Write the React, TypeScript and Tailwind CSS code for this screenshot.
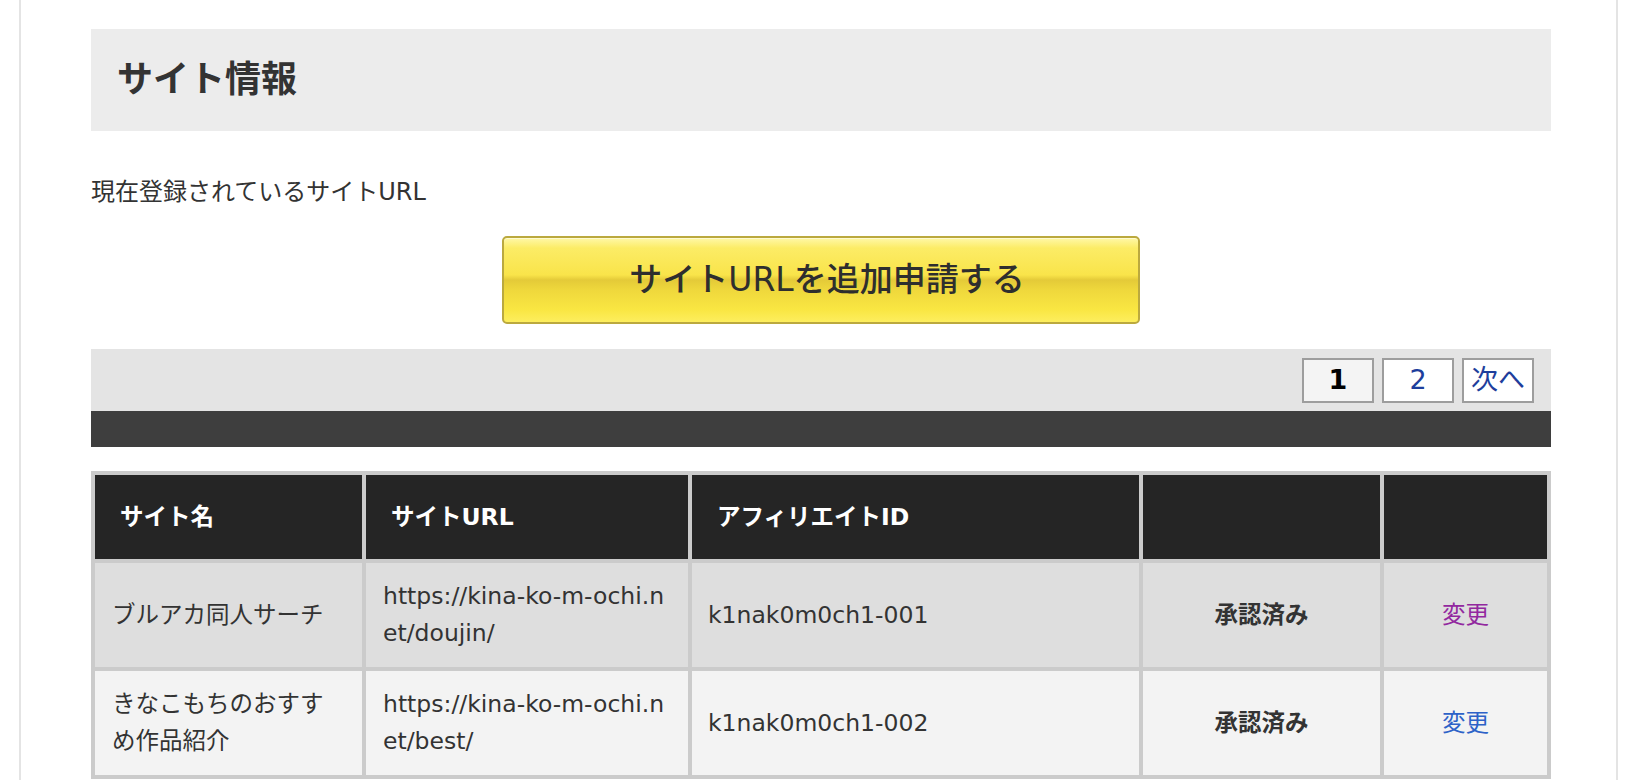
const sites = [
  {
    name: ["ブルアカ同人サーチ"],
    url: ["https://kina-ko-m-ochi.n", "et/doujin/"],
    id: "k1nak0m0ch1-001",
    status: "承認済み",
    visited: true,
    bg: "bg-[#dedede]",
  },
  {
    name: ["きなこもちのおすす", "め作品紹介"],
    url: ["https://kina-ko-m-ochi.n", "et/best/"],
    id: "k1nak0m0ch1-002",
    status: "承認済み",
    visited: false,
    bg: "bg-[#f3f3f3]",
  },
];

function Lines({ lines }: { lines: string[] }) {
  return (
    <span>
      {lines.map((l, i) => (
        <span key={i}>
          {i > 0 && <br />}
          {l}
        </span>
      ))}
    </span>
  );
}

function AddSiteButton() {
  return (
    <button className="mx-auto flex h-[88px] w-[638px] items-center justify-center rounded-[5px] border-2 border-[#bba93e] bg-[linear-gradient(to_bottom,#fff8a8_0%,#fcec66_12%,#f9e44a_44%,#e4ca38_50%,#efd83c_62%,#f9e642_85%,#fdee5e_100%)] pl-3 text-[33px] font-medium text-[#2e2e2e] shadow-[inset_0_1px_0_#fffbd0]">
      サイトURLを追加申請する
    </button>
  );
}

function Pager() {
  return (
    <div className="flex h-[62px] items-center justify-end gap-2 bg-[#e4e4e4] pr-[17px] text-[27px]">
      <span className="flex h-[45px] w-[72px] items-center justify-center border-2 border-[#9d9d9d] bg-[#f4f4f4] font-bold text-black">
        1
      </span>
      <a className="flex h-[45px] w-[72px] items-center justify-center border-2 border-[#9d9d9d] bg-white text-[#1e3e9c]">
        2
      </a>
      <a className="flex h-[45px] w-[72px] items-center justify-center border-2 border-[#9d9d9d] bg-white text-[#1e3e9c]">
        次へ
      </a>
    </div>
  );
}

export default function App() {
  return (
    <div className="min-h-screen bg-white font-['DejaVu_Sans','Noto_Sans_CJK_JP',sans-serif] text-[#333]">
      <div className="ml-[19px] min-h-screen w-[1599px] border-x-2 border-[#e4e4e4] pb-10 pl-[70px] pt-[29px]">
        <div className="w-[1460px]">
          {/* Title */}
          <div className="flex h-[102px] items-center bg-[#ececec] pl-[26px]">
            <h1 className="text-[36px] font-bold">サイト情報</h1>
          </div>

          <p className="mt-[43px] text-[24px] leading-[37px]">現在登録されているサイトURL</p>

          <div className="mt-[25px]">
            <AddSiteButton />
          </div>

          <div className="mt-[25px]">
            <Pager />
            <div className="h-[36px] bg-[#3e3e3e]" />
          </div>

          {/* Site list */}
          <div className="mt-[24px] grid grid-cols-[267px_322px_447px_237px_163px] gap-1 bg-[#cbcbcb] p-1 text-[23.5px] leading-[37px]">
            <div className="flex h-[84px] items-center bg-[#252525] pl-[25px] font-bold text-white">サイト名</div>
            <div className="flex h-[84px] items-center bg-[#252525] pl-[25px] font-bold text-white">サイトURL</div>
            <div className="flex h-[84px] items-center bg-[#252525] pl-[25px] font-bold text-white">アフィリエイトID</div>
            <div className="h-[84px] bg-[#252525]" />
            <div className="h-[84px] bg-[#252525]" />

            {sites.map((s) => (
              <div key={s.id} className="contents">
                <div className={`flex h-[104px] items-center px-[17px] ${s.bg}`}>
                  <Lines lines={s.name} />
                </div>
                <div className={`flex h-[104px] items-center px-[17px] ${s.bg}`}>
                  <Lines lines={s.url} />
                </div>
                <div className={`flex h-[104px] items-center px-[16px] ${s.bg}`}>{s.id}</div>
                <div className={`flex h-[104px] items-center justify-center font-bold ${s.bg}`}>{s.status}</div>
                <div className={`flex h-[104px] items-center justify-center ${s.bg}`}>
                  <a className={s.visited ? "text-[#92289f]" : "text-[#2d62c8]"}>変更</a>
                </div>
              </div>
            ))}
          </div>
        </div>
      </div>
    </div>
  );
}
